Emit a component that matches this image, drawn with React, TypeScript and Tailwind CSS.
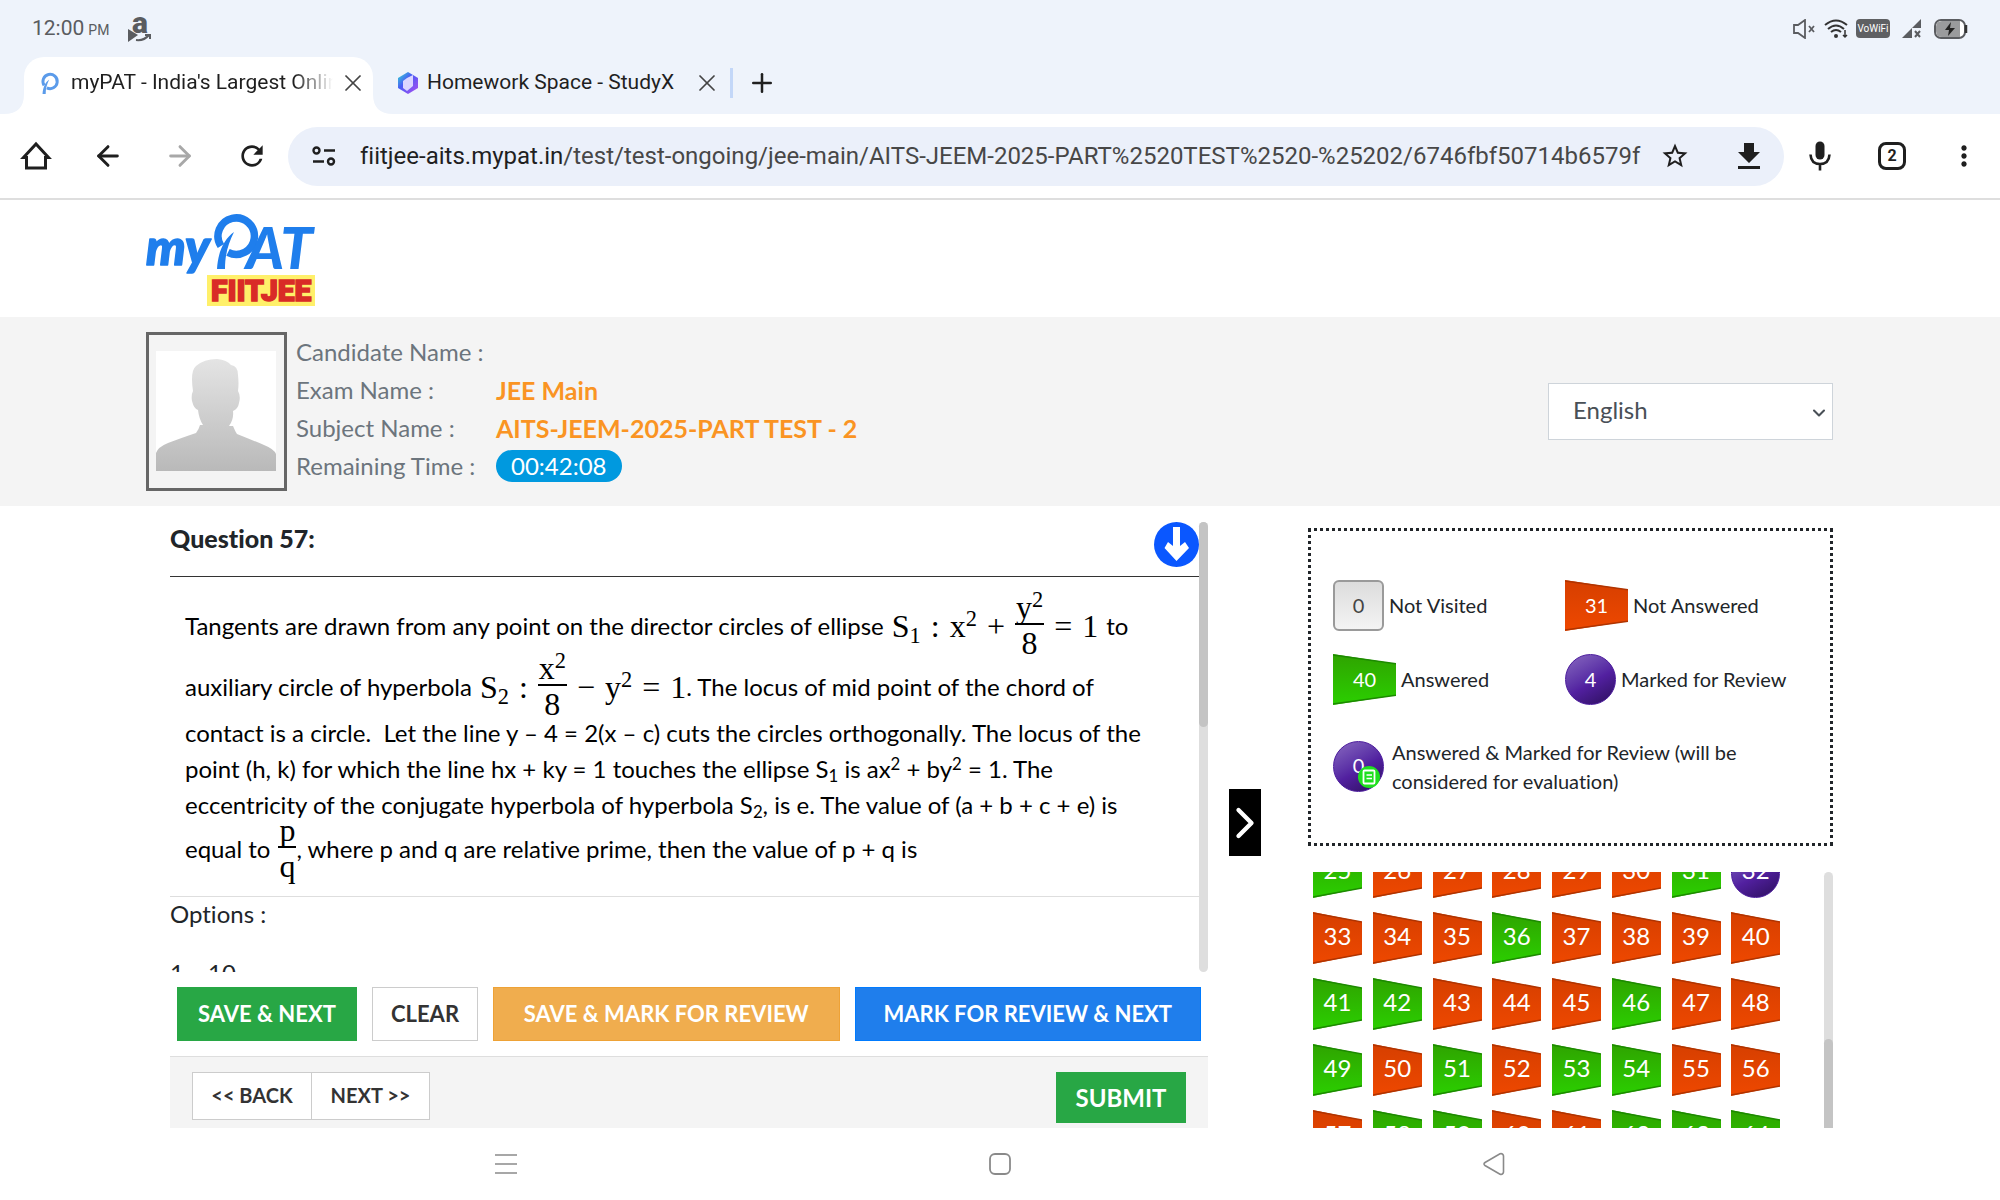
import React from "react";
import { X, Plus, ArrowLeft, ArrowRight, ChevronDown, ChevronRight } from "lucide-react";
import { MdRefresh, MdStarOutline, MdMoreVert } from "react-icons/md";

type Status = "answered" | "unanswered" | "marked" | "markedAnswered" | "unvisited";

interface LegendItem {
  count: number;
  label: string;
  status: Status;
}

const legend: LegendItem[] = [
  { count: 0, label: "Not Visited", status: "unvisited" },
  { count: 31, label: "Not Answered", status: "unanswered" },
  { count: 40, label: "Answered", status: "answered" },
  { count: 4, label: "Marked for Review", status: "marked" },
];

const answered = [25, 31, 36, 41, 42, 46, 49, 51, 53, 54, 58, 59, 62, 63, 64];
const marked = [32];

const questions = Array.from({ length: 40 }, (_, i) => i + 25);

const statusOf = (n: number): Status =>
  answered.includes(n) ? "answered" : marked.includes(n) ? "marked" : "unanswered";

const Flag: React.FC<{ green: boolean }> = ({ green }) => (
  <svg
    className="absolute inset-0 h-full w-full"
    viewBox="0 0 50 52"
    preserveAspectRatio="none"
    aria-hidden="true"
  >
    <defs>
      <linearGradient id={green ? "flag-green" : "flag-red"} x1="0" y1="0" x2="0" y2="1">
        <stop offset="0" stopColor={green ? "#2fa300" : "#d63f00"} />
        <stop offset="1" stopColor={green ? "#2bcf00" : "#ee4800"} />
      </linearGradient>
    </defs>
    <path d="M0 0L50 10V42L0 52Z" fill={green ? "url(#flag-green)" : "url(#flag-red)"} />
    <path
      d="M0 1L50 10M0 51L50 42"
      stroke={green ? "#1d8a00" : "#b03400"}
      strokeWidth="1.5"
      fill="none"
    />
  </svg>
);

const Ball: React.FC = () => (
  <span className="absolute inset-0 rounded-full border border-[#4a1a9c] bg-linear-150 from-[#8a68c0] via-[#5220a0] via-55% to-[#2c0f5c]" />
);

const StatusShape: React.FC<{ status: Status }> = ({ status }) => {
  if (status === "answered") return <Flag green />;
  if (status === "unanswered") return <Flag green={false} />;
  if (status === "unvisited")
    return (
      <span className="absolute inset-0 rounded-md border-2 border-[#9a9a9a] bg-linear-to-b from-[#dcdcdc] to-[#f4f4f4]" />
    );
  return <Ball />;
};

const LegendBadge: React.FC<{ status: Status; count: number }> = ({ status, count }) => (
  <span
    className={`relative flex h-[51px] shrink-0 items-center justify-center pb-0.5 text-xl ${
      status === "answered" || status === "unanswered" ? "w-[63px]" : "w-[51px]"
    } ${status === "unvisited" ? "text-[#444]" : "text-white"}`}
  >
    <StatusShape status={status} />
    <span className="relative">{count}</span>
    {status === "markedAnswered" && (
      <svg className="absolute right-1 bottom-1 h-[22px] w-[22px]" viewBox="0 0 22 22">
        <circle cx="11" cy="11" r="11" fill="#1fe01f" />
        <rect x="5.5" y="4.5" width="11" height="13" rx="1" fill="none" stroke="#fff" strokeWidth="1.8" />
        <path d="M8.5 9H14M8.5 12.5H14" stroke="#fff" strokeWidth="1.5" />
      </svg>
    )}
  </span>
);

/* ring with the leaf shaped stem */
const RingMark: React.FC<{ className?: string; color: string }> = ({ className, color }) => (
  <svg className={className} viewBox="0 0 44 56" aria-hidden="true">
    <path d="M6.9 34A18.2 18.2 0 1 1 14 40.400" fill="none" stroke={color} strokeWidth="7.5" />
    <path d="M3 56C4 39 10 26 20 19C14 31 11 42 11 56Z" fill={color} />
  </svg>
);

const Logo: React.FC = () => (
  <svg
    className="h-[94px] w-[170px] overflow-visible [font-family:Lato,sans-serif]"
    viewBox="0 0 170 94"
    role="img"
    aria-label="myPAT FIITJEE"
  >
    <text
      x="1"
      y="53"
      fontSize="50"
      fontWeight="900"
      fontStyle="italic"
      fill="#1f7eec"
      stroke="#1f7eec"
      strokeWidth="1.5"
      strokeLinejoin="round"
    >
      my
    </text>
    <path d="M75.9 34A18.2 18.2 0 1 1 83 40.400" fill="none" stroke="#1f7eec" strokeWidth="7.5" />
    <path d="M72 57C73 40 79 27 89 20C83 32 80 43 80 57Z" fill="#1f7eec" />
    <text x="101" y="57" fontSize="58" fontWeight="900" fontStyle="italic" fill="#1f7eec">
      AT
    </text>
    <rect x="62" y="63" width="108" height="31" fill="#fff06a" />
    <text
      x="66"
      y="89"
      className="[font-family:Roboto,sans-serif]"
      fontSize="30"
      fontWeight="900"
      fill="#d92b27"
      stroke="#d92b27"
      strokeWidth="1.5"
    >
      FIITJEE
    </text>
  </svg>
);

const Frac: React.FC<{ top: React.ReactNode; bottom: React.ReactNode }> = ({ top, bottom }) => (
  <span className="flex flex-col items-center">
    <span className="border-b-2 border-black px-px leading-8">{top}</span>
    <span className="leading-9">{bottom}</span>
  </span>
);

const Sup: React.FC<{ children: React.ReactNode }> = ({ children }) => (
  <sup className="text-[70%]">{children}</sup>
);

const Sub: React.FC<{ children: React.ReactNode }> = ({ children }) => (
  <sub className="text-[70%]">{children}</sub>
);

const mathClass = "flex items-center gap-[10px] [font-family:'Liberation_Serif',serif] text-[32px]";

const StatusBar: React.FC = () => (
  <div className="flex h-[57px] items-center justify-between px-8 text-[#5a5c60]">
    <div className="flex items-center gap-[19px]">
      <span className="text-[21px]">
        12:00<span className="ml-1 text-sm">PM</span>
      </span>
      <svg className="h-7 w-6 overflow-visible" viewBox="0 0 24 28" aria-hidden="true">
        <text
          x="4"
          y="18"
          className="[font-family:Roboto,sans-serif]"
          fontSize="30"
          fontWeight="900"
          fill="#5a5c60"
        >
          a
        </text>
        <path d="M0 14L10 20L0 27Z" fill="#5a5c60" />
        <path d="M8 25Q16 26 21 20M17 20H22V24" fill="none" stroke="#5a5c60" strokeWidth="2" />
      </svg>
    </div>
    <div className="flex items-center gap-2">
      <svg className="h-5 w-6" viewBox="0 0 24 20" aria-hidden="true">
        <path d="M2 6H6L13 1V19L6 14H2Z" fill="none" stroke="#5a5c60" strokeWidth="1.8" />
        <path d="M17 7L22 13M22 7L17 13" stroke="#5a5c60" strokeWidth="1.8" />
      </svg>
      <svg className="h-5 w-6" viewBox="0 0 24 20" aria-hidden="true">
        <path d="M1 6Q12 -3 23 6M4 10Q12 3 20 10M7 13Q12 9 17 13" fill="none" stroke="#333" strokeWidth="2" />
        <circle cx="12" cy="17" r="2" fill="#333" />
        <path d="M21 11V18M19 16L21 18L23 16" stroke="#333" strokeWidth="1.5" fill="none" />
      </svg>
      <span className="w-[34px] rounded bg-[#5f6063] text-center text-[10px] leading-[19px] text-white">
        VoWiFi
      </span>
      <svg className="ml-1 h-5 w-5" viewBox="0 0 20 20" aria-hidden="true">
        <path d="M0 19L19 0V9H10V19Z" fill="#5a5c60" />
        <path d="M13 12L18 18M18 12L13 18" stroke="#5a5c60" strokeWidth="2" />
      </svg>
      <svg className="ml-1 h-5 w-[34px]" viewBox="0 0 34 20" aria-hidden="true">
        <rect x="1" y="1" width="30" height="18" rx="6" fill="#fff" stroke="#5a5c60" strokeWidth="2" />
        <path d="M8 2H26V18H8Q2 18 2 12V8Q2 2 8 2Z" fill="#9a9b9d" />
        <path d="M32 6V14" stroke="#333" strokeWidth="2.5" />
        <path d="M17 3L11 11H15L14 17L21 9H16Z" fill="#222" />
      </svg>
    </div>
  </div>
);

const TabStrip: React.FC = () => (
  <div className="flex h-[57px] items-end text-[21px] text-[#1f1f1f]">
    <svg className="h-5 w-6" viewBox="0 0 24 20" aria-hidden="true">
      <path d="M4 20Q24 20 24 0V20Z" fill="#fff" />
    </svg>
    <div className="flex h-full w-[349px] items-center rounded-t-[20px] bg-white pr-[6px] pb-[6px] pl-4">
      <RingMark className="mr-[11px] h-[22px] w-5" color="#5b9bea" />
      <span className="flex-1 overflow-hidden whitespace-nowrap [mask-image:linear-gradient(to_right,black_85%,transparent)]">
        myPAT - India&apos;s Largest Online
      </span>
      <button aria-label="Close tab" className="ml-[6px] text-[#444]">
        <X className="h-7 w-7" strokeWidth={1.5} />
      </button>
    </div>
    <svg className="h-5 w-6" viewBox="0 0 24 20" aria-hidden="true">
      <path d="M20 20Q0 20 0 0V20Z" fill="#fff" />
    </svg>
    <div className="flex h-full items-center pb-[6px]">
      <svg className="mr-2 h-[22px] w-[22px]" viewBox="0 0 22 22" aria-hidden="true">
        <defs>
          <linearGradient id="hex" x1="0" y1="0" x2="1" y2="1">
            <stop offset="0" stopColor="#2fe0d0" />
            <stop offset="0.4" stopColor="#4a5cf5" />
            <stop offset="1" stopColor="#b04df0" />
          </linearGradient>
        </defs>
        <path d="M11 0L21 6V16L11 22L1 16V6Z" fill="url(#hex)" />
        <path d="M10 6L16 3V14L10 19L6 16V9Z" fill="#dcd6ff" />
      </svg>
      <span>Homework Space - StudyX</span>
      <button aria-label="Close tab" className="ml-[19px] text-[#444]">
        <X className="h-7 w-7" strokeWidth={1.5} />
      </button>
      <span className="mr-[14px] ml-[9px] h-[30px] w-[3px] bg-[#c3d7f8]" />
      <button aria-label="New tab">
        <Plus className="h-[30px] w-[30px]" strokeWidth={2} />
      </button>
    </div>
  </div>
);

const Toolbar: React.FC = () => (
  <div className="flex h-[86px] items-center border-b-2 border-[#dedede] bg-white px-5 text-[#1f1f1f]">
    <button aria-label="Home" className="mr-10">
      <svg className="h-8 w-8" viewBox="0 0 32 32" fill="none" stroke="currentColor" strokeWidth="3">
        <path d="M3.500 17.500L16 4L28.500 17.500H25.500V28H6.500V17.500Z" />
      </svg>
    </button>
    <button aria-label="Back" className="mr-10">
      <ArrowLeft className="h-[34px] w-8" strokeWidth={2.2} />
    </button>
    <button aria-label="Forward" className="mr-10 text-[#a8a8a8]">
      <ArrowRight className="h-[34px] w-8" strokeWidth={2.2} />
    </button>
    <button aria-label="Reload" className="mr-5">
      <MdRefresh className="h-[34px] w-8" />
    </button>
    <div className="flex h-[59px] min-w-0 flex-1 items-center rounded-full bg-[#ebf0fa] pr-5 pl-6">
      <svg className="mr-6 h-5 w-6 shrink-0" viewBox="0 0 24 20" fill="none" stroke="#1f1f1f" strokeWidth="2.4">
        <circle cx="4.5" cy="4.5" r="3" />
        <path d="M12 4.5H23M1 15.5H12" />
        <circle cx="19" cy="15.5" r="3" />
      </svg>
      <p className="min-w-0 flex-1 overflow-hidden text-2xl whitespace-nowrap text-[#474747]">
        <span className="text-[#1f1f1f]">fiitjee-aits.mypat.in</span>
        /test/test-ongoing/jee-main/AITS-JEEM-2025-PART%2520TEST%2520-%25202/6746fbf50714b6579f
      </p>
      <button aria-label="Bookmark" className="mr-11">
        <MdStarOutline className="h-[30px] w-[30px]" />
      </button>
      <button aria-label="Download">
        <svg className="h-[26px] w-[30px]" viewBox="0 0 30 26" fill="#1f1f1f">
          <path d="M10 0H20V9H26L15 20L4 9H10ZM4 23H26V26H4Z" />
        </svg>
      </button>
    </div>
    <button aria-label="Voice search" className="mr-[42px] ml-5">
      <svg className="h-8 w-8" viewBox="0 0 32 32" fill="none" stroke="currentColor">
        <rect x="11.500" y="1.500" width="9" height="18" rx="4.500" fill="currentColor" stroke="none" />
        <path d="M6.500 14.500Q7 24 16 24Q25 24 25.500 14.500M16 24V30.500" strokeWidth="2.6" />
      </svg>
    </button>
    <button
      aria-label="Open tabs"
      className="mr-[42px] flex h-7 w-7 items-center justify-center rounded-lg border-3 border-[#1f1f1f] text-base font-bold"
    >
      2
    </button>
    <button aria-label="More">
      <MdMoreVert className="h-8 w-8" />
    </button>
  </div>
);

const CandidateBar: React.FC = () => (
  <section className="flex items-center bg-[#f4f4f4] py-[15px] pr-[167px] pl-[146px]">
    <div className="h-[159px] w-[141px] border-3 border-[#666] pt-4 pl-[7px]">
      <svg className="h-[120px] w-[120px]" viewBox="0 0 120 120" role="img" aria-label="Candidate photo">
        <defs>
          <linearGradient id="person" x1="0" y1="0" x2="0" y2="1">
            <stop offset="0" stopColor="#e4e4e4" />
            <stop offset="1" stopColor="#b9b9b9" />
          </linearGradient>
        </defs>
        <rect width="120" height="120" fill="#fff" />
        <path
          d="M0 120V102Q2 96 12 92Q28 86 40 82Q43 78 44 74L47 74Q43 68 42 59Q38 58 36 50Q35 44 37 40Q34 20 40 15Q48 8 61 8Q71 9 75 14Q82 15 82 24Q83 33 82 40Q85 45 83 52Q82 58 77 60Q78 68 73 75L77 75Q79 80 81 83Q96 89 108 94Q118 98 120 103V120Z"
          fill="url(#person)"
        />
      </svg>
    </div>
    <dl className="ml-[9px] grid grid-cols-[200px_auto] pb-[6px] text-2xl leading-[38px] text-[#6c757d]">
      <dt>Candidate Name :</dt>
      <dd />
      <dt>Exam Name :</dt>
      <dd className="text-[25px] font-bold text-[#fa9423]">JEE Main</dd>
      <dt>Subject Name :</dt>
      <dd className="text-[25px] font-bold text-[#fa9423]">AITS-JEEM-2025-PART TEST - 2</dd>
      <dt>Remaining Time :</dt>
      <dd className="flex items-center">
        <span className="rounded-full bg-[#0099df] px-[15px] leading-8 text-white">00:42:08</span>
      </dd>
    </dl>
    <label className="relative ml-auto text-2xl text-[#495057]">
      <span className="sr-only">Language</span>
      <select className="h-[57px] w-[285px] appearance-none border border-[#ced4da] bg-white px-6 pb-1">
        <option>English</option>
      </select>
      <ChevronDown className="absolute top-5 right-1 h-5 w-5" strokeWidth={2.5} />
    </label>
  </section>
);

const QuestionPanel: React.FC = () => (
  <div className="flex h-[450px] overflow-hidden">
    <div className="min-w-0 flex-1">
      <div className="flex h-[55px] items-start justify-between border-b border-[#333]">
        <h2 className="text-[25px] leading-8 font-black text-[#212529]">Question 57:</h2>
        <button aria-label="Scroll down">
          <svg className="h-[45px] w-[45px]" viewBox="0 0 45 45">
            <circle cx="22.5" cy="22.5" r="22.5" fill="#0a57ff" />
            <path d="M19 5H26V24L31 20L35 26L22.5 39L10.5 26L14 20L19 24Z" fill="#fff" />
          </svg>
        </button>
      </div>
      <div className="border-b border-[#dedede] pt-3 pb-[21px] pl-[15px] text-2xl leading-9 whitespace-nowrap text-black">
        <div className="flex h-[74px] items-center gap-2">
          Tangents are drawn from any point on the director circles of ellipse
          <span className={mathClass}>
            <span>S<Sub>1</Sub></span>
            <span>:</span>
            <span>x<Sup>2</Sup></span>
            <span>+</span>
            <Frac top={<>y<Sup>2</Sup></>} bottom="8" />
            <span>=</span>
            <span>1</span>
          </span>
          to
        </div>
        <div className="flex h-12 items-center gap-2">
          auxiliary circle of hyperbola
          <span className={mathClass}>
            <span>S<Sub>2</Sub></span>
            <span>:</span>
            <Frac top={<>x<Sup>2</Sup></>} bottom="8" />
            <span>−</span>
            <span>y<Sup>2</Sup></span>
            <span>=</span>
            <span>1</span>
          </span>
          <span className="-ml-2">. The locus of mid point of the chord of</span>
        </div>
        <div className="mt-1">
          contact is a circle.&nbsp; Let the line y – 4 = 2(x – c) cuts the circles orthogonally. The locus of the
        </div>
        <div>
          point (h, k) for which the line hx + ky = 1 touches the ellipse S<Sub>1</Sub> is ax<Sup>2</Sup> + by
          <Sup>2</Sup> = 1. The
        </div>
        <div>
          eccentricity of the conjugate hyperbola of hyperbola S<Sub>2</Sub>, is e. The value of (a + b + c + e) is
        </div>
        <div className="flex h-[52px] items-center gap-2">
          equal to
          <span className={mathClass}>
            <Frac top="p" bottom="q" />
          </span>
          <span className="-ml-2">, where p and q are relative prime, then the value of p + q is</span>
        </div>
      </div>
      <p className="text-2xl leading-[34px] text-[#212529]">Options :</p>
      <p className="mt-6 text-2xl leading-9 text-[#212529]">1.&nbsp;&nbsp; 10</p>
    </div>
    <div className="w-[9px] rounded-full bg-[#dedede]">
      <div className="h-[205px] rounded-full bg-[#c4c4c4]" />
    </div>
  </div>
);

const Legend: React.FC = () => (
  <section className="h-[318px] border-3 border-dotted border-[#212529] pt-[49px] pl-[22px] text-xl text-[#212529]">
    <ul className="grid grid-cols-[232px_auto] gap-y-[23px]">
      {legend.map((item) => (
        <li key={item.label} className="flex items-center gap-[5px]">
          <LegendBadge status={item.status} count={item.count} />
          <span className="pb-0.5">{item.label}</span>
        </li>
      ))}
      <li className="col-span-2 mt-2 flex items-center gap-2">
        <LegendBadge status="markedAnswered" count={0} />
        <span className="w-[380px] pt-0.5 leading-[29px]">
          Answered &amp; Marked for Review (will be considered for evaluation)
        </span>
      </li>
    </ul>
  </section>
);

const Palette: React.FC = () => (
  <nav aria-label="Questions" className="mt-[26px] flex h-[256px] justify-between overflow-hidden pl-[5px]">
    <div className="-mt-[26px] grid w-[478px] auto-rows-[66px] grid-cols-8">
      {questions.map((n) => (
        <button
          key={n}
          className="relative flex h-[52px] w-[49px] items-center justify-center pb-1 text-2xl leading-8 text-white"
        >
          <StatusShape status={statusOf(n)} />
          <span className="relative">{n}</span>
        </button>
      ))}
    </div>
    <div className="flex w-[9px] flex-col rounded-t-full bg-[#dedede]">
      <div className="mt-[167px] flex-1 rounded-t-full bg-[#c4c4c4]" />
    </div>
  </nav>
);

const App: React.FC = () => (
  <div className="flex min-h-screen flex-col bg-white [font-family:Lato,sans-serif] [font-variant-ligatures:none]">
    <header className="bg-[#eef3fb] [font-family:Roboto,sans-serif]">
      <StatusBar />
      <TabStrip />
      <Toolbar />
    </header>

    <div className="flex h-[117px] items-center pl-[145px]">
      <Logo />
    </div>
    <CandidateBar />

    <main className="flex pr-[167px] pl-[170px]">
      <div className="min-w-0 flex-1 pt-4">
        <QuestionPanel />
        <div className="flex gap-[15px] px-[7px] py-[15px] text-[22px] font-bold text-white">
          <button className="h-[54px] w-[180px] bg-[#28a745] pb-0.5">SAVE &amp; NEXT</button>
          <button className="h-[54px] w-[106px] border border-[#ccc] bg-white pb-0.5 text-[#333]">CLEAR</button>
          <button className="h-[54px] flex-1 border border-[#eea236] bg-[#f0ad4e] pb-0.5">
            SAVE &amp; MARK FOR REVIEW
          </button>
          <button className="h-[54px] flex-1 border border-[#007bff] bg-[#1f7eec] pb-0.5">
            MARK FOR REVIEW &amp; NEXT
          </button>
        </div>
        <div className="flex h-[72px] items-start border-t border-[#dedede] bg-[#f4f4f4] px-[22px] pt-[15px] text-xl font-bold text-[#333]">
          <button className="h-12 w-[120px] border border-[#ccc] bg-white pb-0.5">&lt;&lt; BACK</button>
          <button className="h-12 w-[118px] border border-l-0 border-[#ccc] bg-white pb-0.5">NEXT &gt;&gt;</button>
          <button className="ml-auto h-[51px] w-[130px] bg-[#28a745] text-2xl text-white">SUBMIT</button>
        </div>
      </div>
      <div className="flex w-[100px] pt-[283px] pl-[21px]">
        <button aria-label="Hide panel" className="flex h-[67px] w-8 items-center justify-center bg-black text-white">
          <ChevronRight className="h-[52px] w-[52px] shrink-0" strokeWidth={2} />
        </button>
      </div>
      <aside className="w-[525px] pt-[22px]">
        <Legend />
        <Palette />
      </aside>
    </main>

    <footer className="grid h-[72px] grid-cols-[1fr_494px_494px_1fr] items-center text-[#8a8a8a]">
      <div />
      <button aria-label="Recent apps" className="-ml-3 w-6">
        <svg className="h-6 w-6" viewBox="0 0 24 24" fill="none" stroke="currentColor" strokeWidth="1.6">
          <path d="M1 3H23M1 12H23M1 21H23" />
        </svg>
      </button>
      <button aria-label="Home screen" className="-ml-3 w-6">
        <svg className="h-6 w-6" viewBox="0 0 24 24" fill="none" stroke="currentColor" strokeWidth="1.8">
          <rect x="2" y="2" width="20" height="20" rx="5" />
        </svg>
      </button>
      <button aria-label="Go back" className="-ml-3 w-6">
        <svg className="h-6 w-6" viewBox="0 0 24 24" fill="none" stroke="currentColor" strokeWidth="1.6">
          <path d="M3 10.5L18 1.8Q21 1 21.500 4V20Q21 23 18 22.200L3 13.500Q1 12 3 10.500Z" />
        </svg>
      </button>
    </footer>
  </div>
);

export default App;
